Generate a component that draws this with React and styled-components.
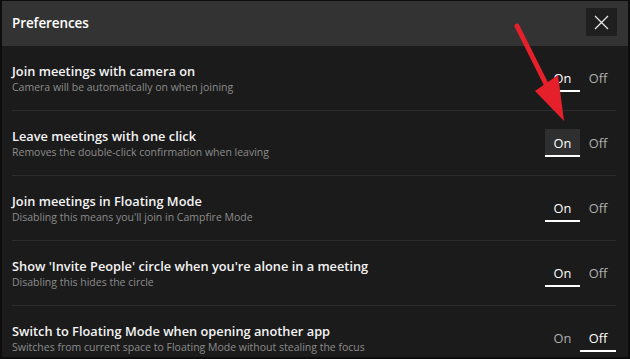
import React from "react";
import styled, { createGlobalStyle } from "styled-components";

const Global = createGlobalStyle`
  html, body { margin: 0; padding: 0; background: #0d0d0d; }
  body { font-family: "Open Sans", "Noto Sans", sans-serif; }
`;

const Window = styled.div`
  position: relative;
  width: 626px;
  height: 356px;
  margin: 1px 2px 2px 2px;
  background: #1b1b1b;
  overflow: hidden;
  display: flex;
  flex-direction: column;
`;

const Header = styled.div`
  height: 45px;
  background: #333333;
  display: flex;
  align-items: center;
  justify-content: space-between;
  padding: 0 11px 0 10px;
  flex-shrink: 0;
`;

const Title = styled.h1`
  margin: 0 0 2px 0;
  font-size: 13.5px;
  font-weight: 600;
  color: #ffffff;
  letter-spacing: -0.1px;
`;

const CloseButton = styled.button`
  width: 31px;
  height: 28px;
  border: none;
  background: #1f1f1f;
  display: flex;
  align-items: center;
  justify-content: center;
  padding: 0;
  margin-top: -3px;
`;

const List = styled.div`
  display: flex;
  flex-direction: column;
  padding: 0 12px 0 10px;
`;

const Row = styled.div`
  height: 64px;
  display: flex;
  align-items: center;
  justify-content: space-between;
  border-bottom: ${(p) => (p.$last ? "none" : "1px solid #2c2c2c")};
  flex-shrink: 0;
`;

const Texts = styled.div`
  display: flex;
  flex-direction: column;
  padding-top: 1px;
`;

const RowTitle = styled.div`
  font-size: 12.8px;
  font-weight: 600;
  color: #f4f4f4;
  line-height: 17px;
`;

const RowSub = styled.div`
  font-size: 10.5px;
  color: #8c8c8c;
  line-height: 15px;
`;

const Toggle = styled.div`
  display: flex;
`;

const Opt = styled.div`
  width: ${(p) => (p.$wide ? "36px" : "35px")};
  height: 28px;
  box-sizing: border-box;
  display: flex;
  align-items: center;
  justify-content: center;
  font-size: 12.8px;
  padding-top: 1px;
  color: ${(p) => (p.$active ? "#ffffff" : "#b0b0b0")};
  background: ${(p) => (p.$hover ? "#2f2f2f" : "transparent")};
  border-bottom: 2px solid ${(p) => (p.$active ? "#ffffff" : "transparent")};
`;

const Arrow = styled.svg`
  position: absolute;
  left: 0;
  top: 0;
  pointer-events: none;
`;

const rows = [
  { t: "Join meetings with camera on", s: "Camera will be automatically on when joining", on: true },
  { t: "Leave meetings with one click", s: "Removes the double-click confirmation when leaving", on: true, hover: true },
  { t: "Join meetings in Floating Mode", s: "Disabling this means you'll join in Campfire Mode", on: true },
  { t: "Show 'Invite People' circle when you're alone in a meeting", s: "Disabling this hides the circle", on: true },
  { t: "Switch to Floating Mode when opening another app", s: "Switches from current space to Floating Mode without stealing the focus", on: false },
];

export default function App() {
  return (
    <>
      <Global />
      <Window>
        <Header>
          <Title>Preferences</Title>
          <CloseButton aria-label="Close">
            <svg width="15" height="15" viewBox="0 0 15 15">
              <path d="M1 1 L14 14 M14 1 L1 14" stroke="#e6e6e6" strokeWidth="1.3" fill="none" />
            </svg>
          </CloseButton>
        </Header>
        <List>
          {rows.map((r, i) => (
            <Row key={i} $last={i === rows.length - 1}>
              <Texts>
                <RowTitle>{r.t}</RowTitle>
                <RowSub>{r.s}</RowSub>
              </Texts>
              <Toggle>
                <Opt $active={r.on} $hover={r.hover}>On</Opt>
                <Opt $wide $active={!r.on}>Off</Opt>
              </Toggle>
            </Row>
          ))}
        </List>
        <Arrow width="626" height="356" viewBox="0 0 626 356">
          <line x1="515" y1="25" x2="550" y2="95" stroke="#e5202a" strokeWidth="5" strokeLinecap="round" />
          <polygon points="533,90 556,74 562,120" fill="#e5202a" />
        </Arrow>
      </Window>
    </>
  );
}
